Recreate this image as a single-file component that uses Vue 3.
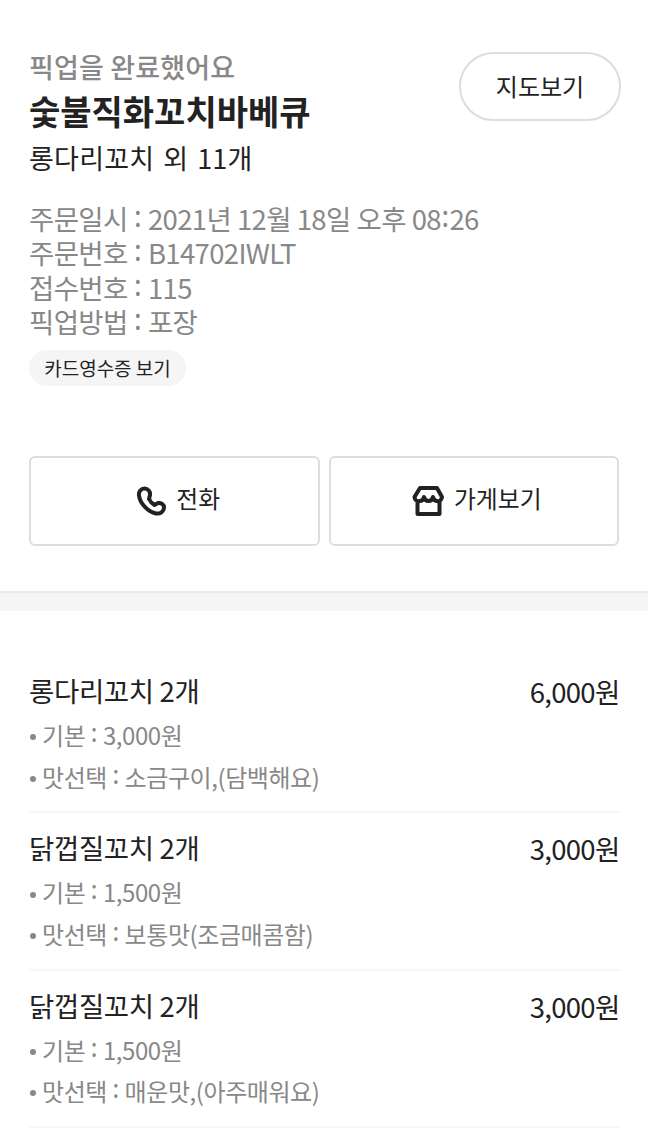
<script setup>
const info = [
  { label: "주문일시", value: ["2021년 12월 18일 오후 08", ":", "26"] },
  { label: "주문번호", value: ["B14702IWLT"] },
  { label: "접수번호", value: ["115"] },
  { label: "픽업방법", value: ["포장"] },
];

const items = [
  {
    name: "롱다리꼬치 2개",
    price: "6,000원",
    options: [
      { label: "기본", value: "3,000원" },
      { label: "맛선택", value: "소금구이,(담백해요)" },
    ],
  },
  {
    name: "닭껍질꼬치 2개",
    price: "3,000원",
    options: [
      { label: "기본", value: "1,500원" },
      { label: "맛선택", value: "보통맛(조금매콤함)" },
    ],
  },
  {
    name: "닭껍질꼬치 2개",
    price: "3,000원",
    options: [
      { label: "기본", value: "1,500원" },
      { label: "맛선택", value: "매운맛,(아주매워요)" },
    ],
  },
];
</script>

<template>
  <div class="page">
    <header class="summary">
      <div class="top">
        <div>
          <p class="status">픽업을 완료했어요</p>
          <h1 class="store">숯불직화꼬치바베큐</h1>
          <p class="menu">롱다리꼬치 외 11개</p>
        </div>
        <button class="map"><span>지도보기</span></button>
      </div>
      <ul class="info">
        <li v-for="row in info" :key="row.label">
          {{ row.label }} <span class="colon">:</span>&#32;<span
            v-for="part in row.value"
            :key="part"
            :class="{ colon: part === ':' }"
            >{{ part }}</span
          >
        </li>
      </ul>
      <button class="receipt"><span>카드영수증 보기</span></button>
      <div class="actions">
        <button class="action">
          <svg width="32" height="32" viewBox="0 0 32 32">
            <path d="M10.500 3.500C7 3.500 4.500 6.500 5 10.500C6 18.500 14 27 22 28.500C26 29.200 30 26.500 30 22.500C30 19.500 27 17.500 24 18L20.500 20C18 18.500 16.200 16.500 15 14L16 10C16.500 6.500 14 3.500 10.500 3.500Z" />
          </svg>
          <span>전화</span>
        </button>
        <button class="action">
          <svg width="32" height="32" viewBox="0 0 32 32">
            <path d="M8 3H25L30 12Q29 17 25 16Q22 16 21 12Q20 16 16.500 16Q13 16 12 12Q11 16 8 16Q3 17 2.500 12ZM5.500 16V29H27.500V16" />
          </svg>
          <span>가게보기</span>
        </button>
      </div>
    </header>
    <div class="divider"></div>
    <section class="items">
      <article v-for="(item, i) in items" :key="i" class="item">
        <div class="row">
          <h2 class="name">{{ item.name }}</h2>
          <span class="price">{{ item.price }}</span>
        </div>
        <ul class="options">
          <li v-for="option in item.options" :key="option.label">
            <div>{{ option.label }} <span class="colon">:</span> {{ option.value }}</div>
          </li>
        </ul>
      </article>
    </section>
  </div>
</template>

<style>
body {
  margin: 0;
  background: #fff;
}
</style>

<style scoped>
.page {
  width: 648px;
  height: 1128px;
  overflow: hidden;
  font-family: "Noto Sans CJK KR", sans-serif;
  color: #222;
  white-space: nowrap;
}

h1,
h2,
p,
ul {
  margin: 0;
  padding: 0;
  list-style: none;
  font-weight: 400;
}

button {
  box-sizing: border-box;
  padding: 0;
  font-family: inherit;
  color: #222;
  background: #fff;
}

.summary {
  box-sizing: border-box;
  height: 591px;
  padding: 48px 28px 0 29px;
}

.top {
  display: flex;
  justify-content: space-between;
}

.status {
  font-size: 27px;
  line-height: 38px;
  font-weight: 500;
  letter-spacing: 0.150px;
  color: #888;
}

.store {
  font-size: 34px;
  line-height: 50px;
  font-weight: 700;
}

.menu {
  font-size: 27px;
  line-height: 43px;
  letter-spacing: 0.250px;
  word-spacing: 2.500px;
}

.map {
  width: 162px;
  height: 69px;
  margin: 4px -1px 0 0;
  border: 2px solid #ddd;
  border-radius: 35px;
  font-size: 24px;
}

.map span,
.receipt span {
  display: block;
  margin-top: -2px;
}

.info {
  margin-top: 22px;
  font-size: 27.500px;
  line-height: 34.300px;
  letter-spacing: -0.650px;
  word-spacing: 0.400px;
  color: #888;
}

/* the separator sits at mid height of the line, taller than the font's own */
.colon {
  display: inline-block;
  margin: 0 1px 0 0.500px;
  line-height: 1;
  transform: translateY(-4px) scaleY(1.100);
}

.receipt {
  display: block;
  width: 157px;
  height: 36px;
  margin-top: 12px;
  border: 0;
  border-radius: 18px;
  background: #f5f5f5;
  font-size: 19px;
}

.actions {
  display: flex;
  gap: 9px;
  margin: 70px 1px 0 0;
}

.action {
  display: flex;
  flex: 1;
  align-items: center;
  justify-content: center;
  gap: 10px;
  height: 90px;
  padding-left: 6px;
  border: 2px solid #ddd;
  border-radius: 6px;
  font-size: 23.800px;
}

.action span {
  margin-top: -7px;
}

.action svg {
  fill: none;
  stroke: #222;
  stroke-width: 4;
  stroke-linejoin: round;
}

.divider {
  box-sizing: border-box;
  height: 20px;
  border-top: 2px solid #e9e9e9;
  background: #f5f5f5;
}

.items {
  padding: 45px 28px 0 29px;
}

.item {
  box-sizing: border-box;
  height: 157.300px;
  padding-top: 13px;
  border-bottom: 2px solid #f7f7f7;
}

.row {
  display: flex;
  justify-content: space-between;
  height: 45px;
  line-height: 44px;
}

.name {
  font-size: 27.500px;
  line-height: 42px;
  letter-spacing: -0.350px;
}

.price {
  margin-right: 0.500px;
  font-size: 27.500px;
  letter-spacing: -0.700px;
}

.options {
  font-size: 24px;
  line-height: 41.500px;
  letter-spacing: -0.430px;
  color: #888;
}

.options li {
  display: flex;
  align-items: center;
}

.options li::before {
  content: "";
  width: 6px;
  height: 6px;
  margin: 5px 6px 0 1px;
  border-radius: 50%;
  background: #888;
}
</style>
